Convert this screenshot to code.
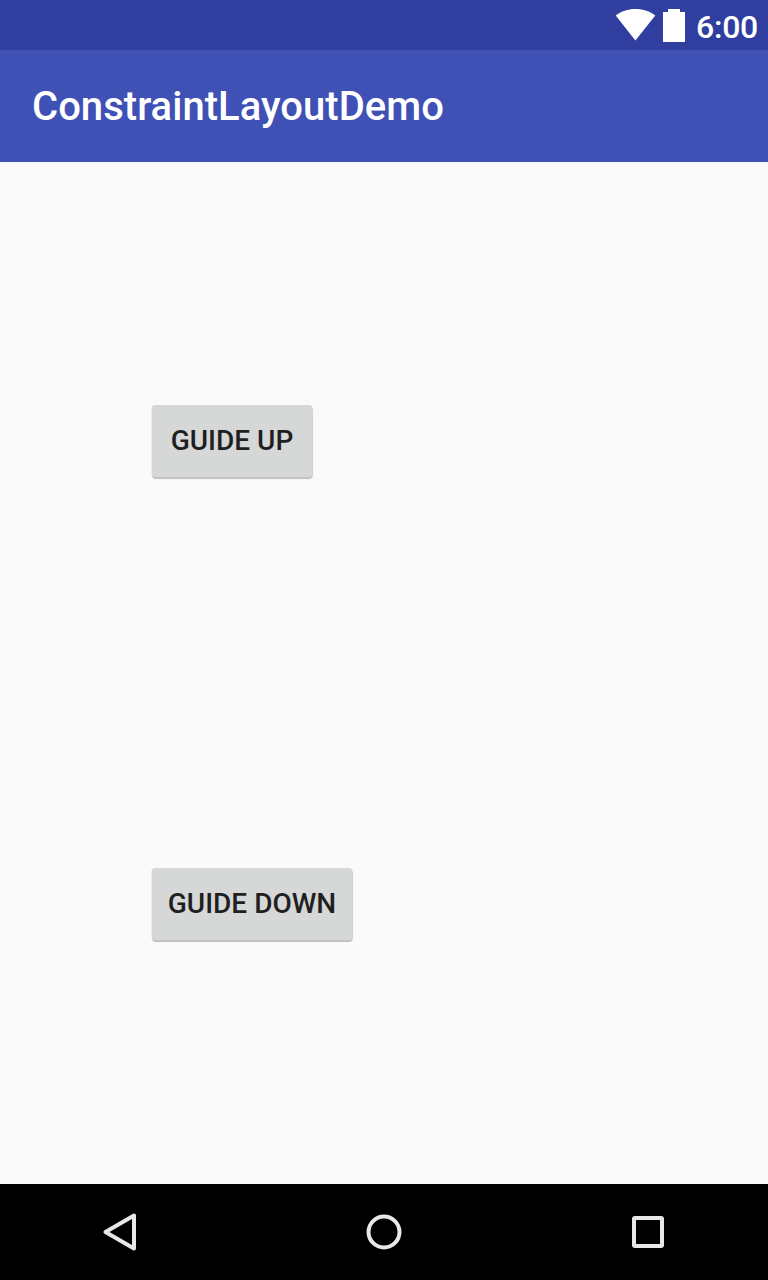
<script>
  const buttons = ['Guide up', 'Guide down'];
</script>

<div class="screen">
  <div class="status">
    <svg class="wifi" width="40" height="32" viewBox="0 0 40 32"><path d="M-.3 6.600C5.200 2.300 11.500 0 19.500 0s14.300 2.300 19.800 6.600L19.400 31.500z" fill="#fff"/></svg>
    <svg class="battery" width="22" height="34" viewBox="0 0 22 34"><path d="M5 0h12v3h5v30H0V3h5z" fill="#fff"/></svg>
    <span class="time">6:00</span>
  </div>
  <header>ConstraintLayoutDemo</header>
  <main>
    <button class="up">{buttons[0]}</button>
    <button class="down">{buttons[1]}</button>
  </main>
  <nav>
    <svg width="40" height="40" viewBox="0 0 40 40"><path d="M34 3.500v33L5.500 20z"/></svg>
    <svg width="40" height="40" viewBox="0 0 40 40"><circle cx="20" cy="20" r="15.500"/></svg>
    <svg width="40" height="40" viewBox="0 0 40 40"><rect x="6" y="6" width="28" height="28" rx="1"/></svg>
  </nav>
</div>

<style>
  .screen { display: flex; flex-direction: column; width: 768px; height: 1280px; overflow: hidden; background: #fafafa; font-family: Roboto, sans-serif; }
  .status { display: flex; height: 50px; box-sizing: border-box; padding: 9px 10px 0 0; justify-content: flex-end; background: #303f9f; }
  .wifi { overflow: visible; }
  .battery { margin-left: 7px; }
  .time { margin-left: 11px; color: #fff; font-size: 32px; line-height: 37px; font-weight: 500; letter-spacing: -.25px; }
  header { height: 112px; box-sizing: border-box; padding: 1px 0 0 32px; background: #3f51b5; color: #fff; font-size: 40px; font-weight: 500; line-height: 112px; letter-spacing: .03px; }
  main { flex: 1; display: flex; flex-direction: column; align-items: flex-start; padding: 243px 0 0 152px; }
  button { height: 72px; padding: 0; border: 0; border-radius: 4px; background: #d6d7d7; box-shadow: -.5px 0 0 0 #d6d7d7, .5px 0 0 0 #d0d1d1, 0 2px 0 0 #c2c3c3, 1px 2px 1px 0 rgba(0,0,0,.16); color: #1f1f1f; font: 500 28px/70px Roboto, sans-serif; text-transform: uppercase; }
  .up { width: 160px; }
  .down { width: 200px; margin-top: 391px; }
  nav { display: flex; align-items: center; justify-content: space-between; height: 96px; box-sizing: border-box; padding: 0 100px; background: #000; }
  nav svg { fill: none; stroke: #e8e8e8; stroke-width: 4; stroke-linejoin: round; }
</style>
